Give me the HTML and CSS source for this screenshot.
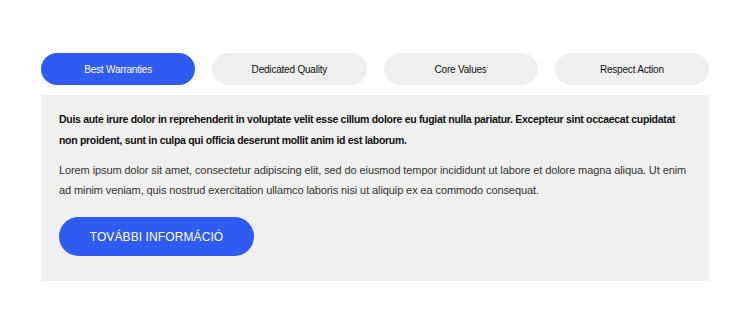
FILE: index.html
```html
<!DOCTYPE html>
<html lang="en">
<head>
<meta charset="utf-8">
<link rel="stylesheet" href="styles.css">
</head>
<body>
<div class="wrap">
  <div class="tabs">
    <div class="tab active">Best Warranties</div>
    <div class="tab">Dedicated Quality</div>
    <div class="tab">Core Values</div>
    <div class="tab">Respect Action</div>
  </div>
  <div class="panel">
    <p class="lead">Duis aute irure dolor in reprehenderit in voluptate velit esse cillum dolore eu fugiat nulla pariatur. Excepteur sint occaecat cupidatat non proident, sunt in culpa qui officia deserunt mollit anim id est laborum.</p>
    <p class="body">Lorem ipsum dolor sit amet, consectetur adipiscing elit, sed do eiusmod tempor incididunt ut labore et dolore magna aliqua. Ut enim ad minim veniam, quis nostrud exercitation ullamco laboris nisi ut aliquip ex ea commodo consequat.</p>
    <a class="btn" href="#">TOVÁBBI INFORMÁCIÓ</a>
  </div>
</div>
</body>
</html>
```
FILE: styles.css
```css
html, body {
  margin: 0;
  padding: 0;
  background: #ffffff;
}
body {
  font-family: "Liberation Sans", Arial, sans-serif;
  color: #111;
}
.wrap {
  width: 668px;
  margin: 53px 0 0 41px;
}
.tabs {
  display: grid;
  grid-template-columns: repeat(4, 1fr);
  column-gap: 17px;
  height: 32px;
}
.tab {
  display: flex;
  align-items: center;
  justify-content: center;
  border-radius: 16px;
  background: #efefef;
  font-size: 10px;
  color: #111;
  letter-spacing: -0.2px;
}
.tab.active {
  background: #2f5bf2;
  color: #fff;
}
.panel {
  margin-top: 10px;
  background: #f0f0f0;
  padding: 14px 18px 25px 18px;
}
.lead {
  margin: 0;
  font-size: 10.5px;
  font-weight: bold;
  line-height: 21px;
  letter-spacing: -0.3px;
  color: #111;
}
.body {
  margin: 9px 0 0 0;
  font-size: 11px;
  line-height: 20px;
  letter-spacing: -0.1px;
  color: #333;
}
.btn {
  display: flex;
  align-items: center;
  justify-content: center;
  margin-top: 17px;
  width: 195px;
  height: 39px;
  border-radius: 20px;
  background: #2f5bf2;
  color: #fff;
  text-decoration: none;
  font-size: 12px;
  letter-spacing: 0.1px;
}
```
